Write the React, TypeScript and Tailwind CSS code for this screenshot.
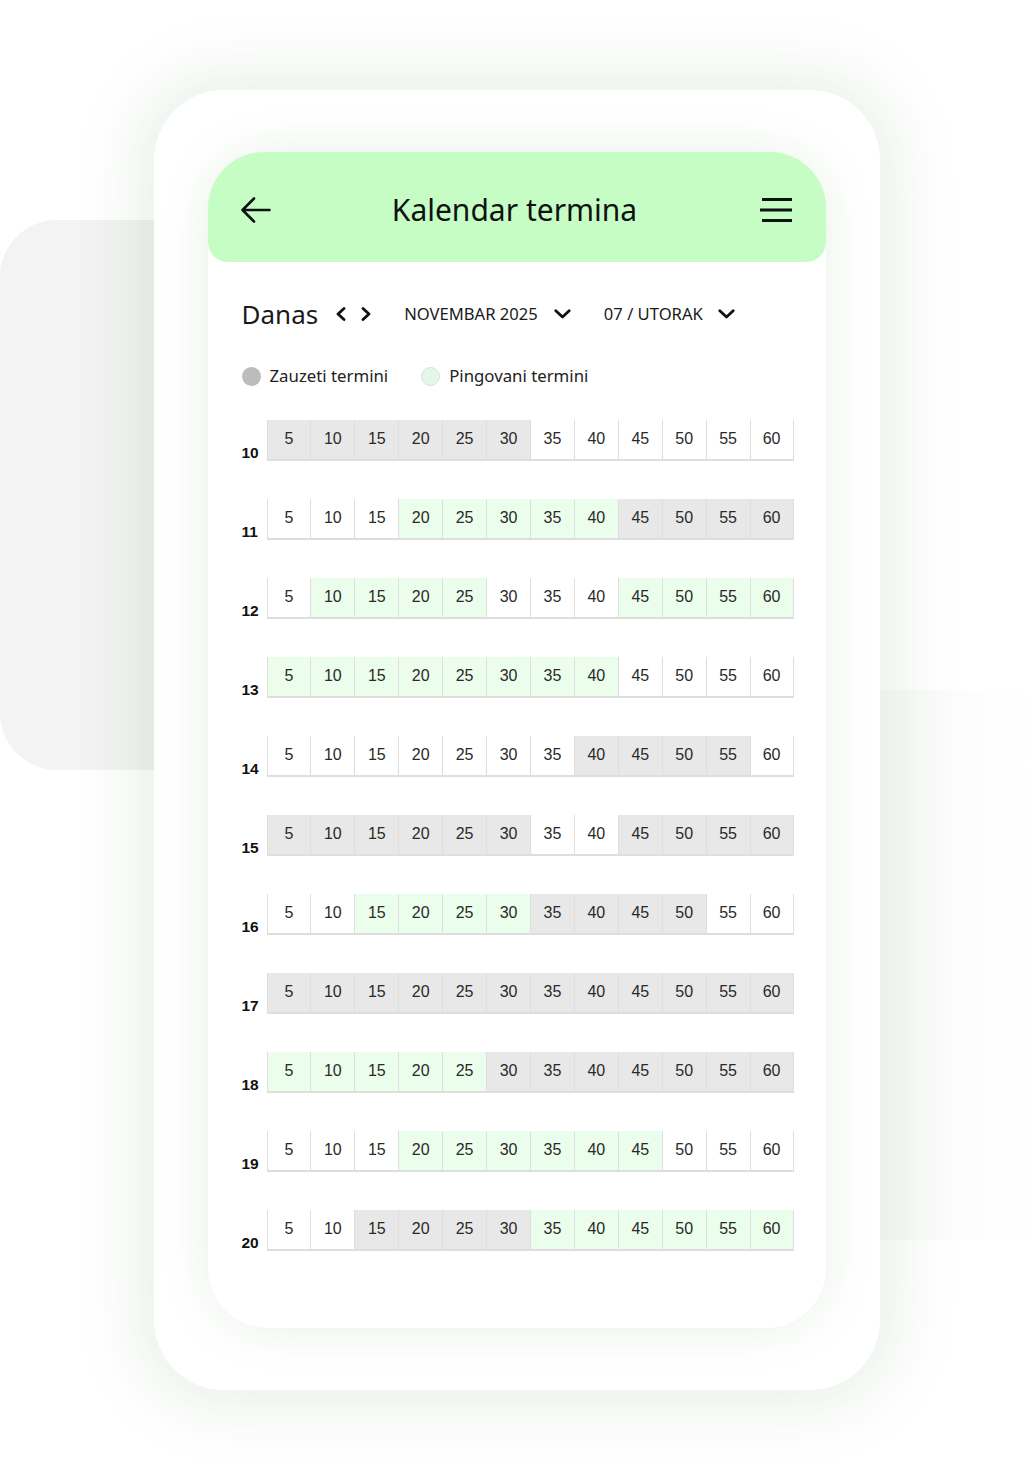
import React from "react";

const rows: [number, string][] = [
  [10, "GGGGGGWWWWWW"],
  [11, "WWWPPPPPGGGG"],
  [12, "WPPPPWWWPPPP"],
  [13, "PPPPPPPPWWWW"],
  [14, "WWWWWWWGGGGW"],
  [15, "GGGGGGWWGGGG"],
  [16, "WWPPPPGGGGWW"],
  [17, "GGGGGGGGGGGG"],
  [18, "PPPPPGGGGGGG"],
  [19, "WWWPPPPPPWWW"],
  [20, "WWGGGGPPPPPP"],
];

const cellBg: Record<string, string> = {
  G: "bg-[#e8e8e8]",
  P: "bg-[#ebfdeb]",
  W: "bg-white",
};

const minutes = [5, 10, 15, 20, 25, 30, 35, 40, 45, 50, 55, 60];

function ChevronLeft() {
  return (
    <svg width="10" height="14" viewBox="0 0 10 14" fill="none">
      <path d="M8 1.5 L2 7 L8 12.5" stroke="#111" strokeWidth="2.8" strokeLinecap="round" strokeLinejoin="round" />
    </svg>
  );
}
function ChevronRight() {
  return (
    <svg width="10" height="14" viewBox="0 0 10 14" fill="none">
      <path d="M2 1.5 L8 7 L2 12.5" stroke="#111" strokeWidth="2.8" strokeLinecap="round" strokeLinejoin="round" />
    </svg>
  );
}
function ChevronDown() {
  return (
    <svg width="17" height="10" viewBox="0 0 17 10" fill="none">
      <path d="M1.8 1.8 L8.5 8 L15.2 1.8" stroke="#111" strokeWidth="2.8" strokeLinecap="round" strokeLinejoin="round" />
    </svg>
  );
}

export default function App() {
  return (
    <div className="relative w-[1033px] h-[1482px] overflow-hidden bg-white">
      {/* decorative background shapes */}
      <div className="absolute left-0 top-[220px] w-[260px] h-[550px] rounded-[57px] bg-[#f3f3f3]" />
      <div className="absolute left-[800px] top-[690px] w-[233px] h-[550px] bg-gradient-to-r from-[#f6f7f6] to-white" />

      <div className="relative flex justify-center pt-[90px]">
        <div className="w-[726px] h-[1300px] rounded-[70px] bg-white px-[54px] pt-[62px] shadow-[0_0_70px_14px_rgba(50,120,50,0.11)]">
          <div className="w-[618px] h-[1176px] rounded-[60px] bg-white shadow-[0_0_50px_rgba(40,120,40,0.10)]">
            {/* header */}
            <div
              className="h-[110px] bg-[#c5fdc5] rounded-t-[56px] rounded-b-[20px] flex items-center justify-between px-[33px] pt-[6px]"
              style={{ fontFamily: '"Noto Sans", "Open Sans", sans-serif' }}
            >
              <svg width="30" height="26" viewBox="0 0 30 26" fill="none">
                <path d="M13 1.5 L1.5 13 L13 24.5 M1.5 13 H28.5" stroke="#111" strokeWidth="2.6" strokeLinecap="round" strokeLinejoin="round" />
              </svg>
              <div className="text-[30px] leading-none text-[#111]">Kalendar termina</div>
              <svg width="34" height="26" viewBox="0 0 34 26" fill="none">
                <path d="M3 2.5 H33 M1 13 H33 M3 23.5 H33" stroke="#111" strokeWidth="3" />
              </svg>
            </div>

            {/* content */}
            <div className="pl-[34px] pr-[32px]">
              <div
                className="mt-[32px] h-[40px] flex items-center text-[#1a1a1a]"
                style={{ fontFamily: '"Noto Sans", "Open Sans", sans-serif' }}
              >
                <span className="text-[26px] leading-none">Danas</span>
                <span className="ml-[18px] flex"><ChevronLeft /></span>
                <span className="ml-[15px] flex"><ChevronRight /></span>
                <span className="ml-[33px] text-[16.6px] leading-none">NOVEMBAR 2025</span>
                <span className="ml-[16px] flex"><ChevronDown /></span>
                <span className="ml-[33px] text-[16.6px] leading-none">07 / UTORAK</span>
                <span className="ml-[15px] flex"><ChevronDown /></span>
              </div>

              <div
                className="mt-[32px] h-[20px] flex items-center text-[16.8px] text-[#222]"
                style={{ fontFamily: '"Noto Sans", "Open Sans", sans-serif' }}
              >
                <span className="w-[19px] h-[19px] rounded-full bg-[#bcbcbc] blur-[0.6px]" />
                <span className="ml-[9px] leading-none">Zauzeti termini</span>
                <span className="ml-[33px] w-[19px] h-[19px] rounded-full bg-[#e4f7e8] border border-[#d4e6d8]" />
                <span className="ml-[9px] leading-none">Pingovani termini</span>
              </div>

              <div
                className="mt-[34px] flex flex-col gap-[38px]"
                style={{ fontFamily: '"Liberation Sans", Arial, sans-serif' }}
              >
                {rows.map(([hour, pattern]) => (
                  <div key={hour} className="flex items-end">
                    <div className="w-[25px] text-[15.5px] leading-[15px] font-bold text-[#111] pb-[1px]">{hour}</div>
                    <div className="w-[527px] grid grid-cols-12">
                      {minutes.map((m, i) => (
                        <div
                          key={m}
                          className={`h-[41px] flex items-center justify-center border-l border-b-2 border-[#dedede] text-[16px] text-[#2a2a2a] pb-[1px] ${cellBg[pattern[i]]} ${i === 11 ? "border-r" : ""}`}
                        >
                          {m}
                        </div>
                      ))}
                    </div>
                  </div>
                ))}
              </div>
            </div>
          </div>
        </div>
      </div>
    </div>
  );
}
